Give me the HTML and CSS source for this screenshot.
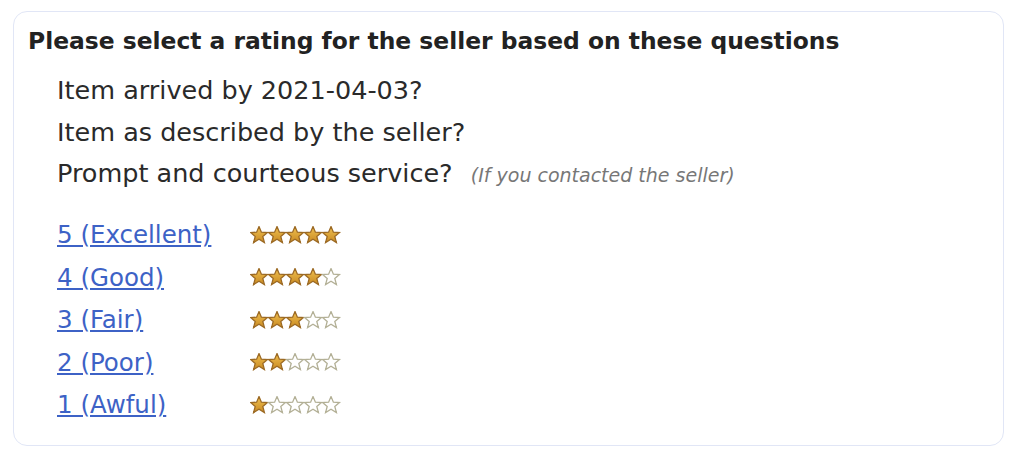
FILE: index.html
```html
<!DOCTYPE html>
<html>
<head>
<meta charset="utf-8">
<link rel="stylesheet" href="styles.css">
</head>
<body>
<svg width="0" height="0" class="defs">
  <defs>
    <linearGradient id="gold" x1="0" y1="0" x2="0" y2="1">
      <stop offset="0" stop-color="#f0c050"/>
      <stop offset="1" stop-color="#c98a22"/>
    </linearGradient>
    <polygon id="star" points="9,0.6 11.4,6.2 17.4,6.5 12.8,10.5 14.4,16.6 9,13.3 3.6,16.6 5.2,10.5 0.6,6.5 6.6,6.2"/>
  </defs>
</svg>
<div class="box">
  <h1 class="title">Please select a rating for the seller based on these questions</h1>
  <ul class="questions">
    <li>Item arrived by 2021-04-03?</li>
    <li>Item as described by the seller?</li>
    <li>Prompt and courteous service? <span class="note">(If you contacted the seller)</span></li>
  </ul>
  <div class="ratings">
    <div class="row"><a href="#">5 (Excellent)</a><svg class="stars" width="92" height="18" viewBox="0 0 92 18"><use href="#star" x="0" class="on"/><use href="#star" x="18" class="on"/><use href="#star" x="36" class="on"/><use href="#star" x="54" class="on"/><use href="#star" x="72" class="on"/></svg></div>
    <div class="row"><a href="#">4 (Good)</a><svg class="stars" width="92" height="18" viewBox="0 0 92 18"><use href="#star" x="0" class="on"/><use href="#star" x="18" class="on"/><use href="#star" x="36" class="on"/><use href="#star" x="54" class="on"/><use href="#star" x="72" class="off"/></svg></div>
    <div class="row"><a href="#">3 (Fair)</a><svg class="stars" width="92" height="18" viewBox="0 0 92 18"><use href="#star" x="0" class="on"/><use href="#star" x="18" class="on"/><use href="#star" x="36" class="on"/><use href="#star" x="54" class="off"/><use href="#star" x="72" class="off"/></svg></div>
    <div class="row"><a href="#">2 (Poor)</a><svg class="stars" width="92" height="18" viewBox="0 0 92 18"><use href="#star" x="0" class="on"/><use href="#star" x="18" class="on"/><use href="#star" x="36" class="off"/><use href="#star" x="54" class="off"/><use href="#star" x="72" class="off"/></svg></div>
    <div class="row"><a href="#">1 (Awful)</a><svg class="stars" width="92" height="18" viewBox="0 0 92 18"><use href="#star" x="0" class="on"/><use href="#star" x="18" class="off"/><use href="#star" x="36" class="off"/><use href="#star" x="54" class="off"/><use href="#star" x="72" class="off"/></svg></div>
  </div>
</div>
</body>
</html>
```

FILE: styles.css
```css
html, body {
  margin: 0;
  padding: 0;
  background: #fff;
}
body {
  padding: 11px 0 0 13px;
  font-family: "DejaVu Sans", Verdana, sans-serif;
  color: #222;
}
.defs {
  position: absolute;
  width: 0;
  height: 0;
}
.box {
  box-sizing: border-box;
  width: 991px;
  height: 435px;
  border: 1px solid #e1e6f6;
  border-radius: 14px;
  padding: 0 0 0 14px;
}
.title {
  margin: 16px 0 0 0;
  font-size: 23.4px;
  font-weight: bold;
  line-height: 26px;
  color: #222;
  white-space: nowrap;
}
.questions {
  list-style: none;
  margin: 16px 0 0 29px;
  padding: 0;
  font-size: 25.5px;
  color: #2a2a2a;
}
.questions li {
  line-height: 41.5px;
  white-space: nowrap;
}
.note {
  font-size: 19px;
  font-style: italic;
  color: #777;
  margin-left: 10px;
}
.ratings {
  margin: 17px 0 0 29px;
}
.row {
  display: flex;
  align-items: center;
  height: 42.5px;
}
.row a {
  width: 193px;
  font-size: 24.5px;
  color: #3d62c6;
  text-decoration: underline;
}
.stars use.on {
  fill: url(#gold);
  stroke: #9c6a24;
  stroke-width: 1.3;
}
.stars use.off {
  fill: #fff;
  stroke: #b3b096;
  stroke-width: 1.3;
}
```
